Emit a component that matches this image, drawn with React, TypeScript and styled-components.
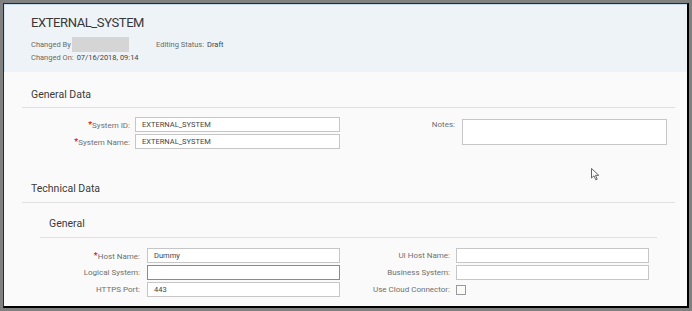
import React from "react";
import styled, { createGlobalStyle } from "styled-components";

const GlobalStyle = createGlobalStyle`
  html, body {
    margin: 0;
    padding: 0;
    background: #808080;
    width: 692px;
    height: 311px;
    overflow: hidden;
    font-family: Roboto, "Liberation Sans", sans-serif;
  }
`;

const Frame = styled.div`
  padding: 3px 0 0 3px;
`;

const Window = styled.div`
  position: relative;
  box-sizing: border-box;
  width: 686px;
  height: 305px;
  border-left: 1px solid #2a2a2a;
  border-top: 1px solid #2a2a2a;
  border-right: 2px solid #000;
  border-bottom: 2px solid #000;
  background: #fafafa;
  display: flex;
  flex-direction: column;
  overflow: hidden;
`;

const Header = styled.div`
  box-sizing: border-box;
  height: 68px;
  background: #eef3f8;
  border-top: 1px solid #c5d9ee;
  border-left: 1px solid #d6e4f2;
  padding: 8px 0 0 26px;
`;

const Title = styled.div`
  font-size: 13px;
  color: #383838;
  height: 19px;
  line-height: 19px;
  letter-spacing: -0.4px;
`;

const MetaRow = styled.div<{ $top?: number }>`
  display: flex;
  align-items: center;
  height: 13px;
  font-size: 7.5px;
  color: #6a6a6a;
  margin-top: ${(p) => p.$top ?? 0}px;
`;

const MetaCell = styled.div<{ $w?: number }>`
  display: flex;
  align-items: center;
  width: ${(p) => (p.$w ? `${p.$w}px` : "auto")};
`;

const Value = styled.span`
  color: #444;
  margin-left: 3px;
`;

const Masked = styled.span`
  display: inline-block;
  width: 57px;
  height: 15px;
  margin-left: 1px;
  background: #d5d5d5;
`;

const Content = styled.div`
  flex: 1;
  padding: 0 12px 0 18px;
`;

const SectionTitle = styled.div<{ $top: number; $indent?: number }>`
  margin-top: ${(p) => p.$top}px;
  padding-left: ${(p) => p.$indent ?? 9}px;
  font-size: 10.5px;
  color: #3a3a3a;
  height: 14px;
  line-height: 14px;
`;

const Divider = styled.div<{ $top: number; $inset?: number }>`
  margin: ${(p) => p.$top}px ${(p) => p.$inset ?? 0}px 0 ${(p) => p.$inset ?? 0}px;
  height: 1px;
  background: #e0e0e0;
`;

const FormGrid = styled.div<{ $cols: string; $top: number; $pitch: number }>`
  display: grid;
  grid-template-columns: ${(p) => p.$cols};
  grid-auto-rows: 15px;
  row-gap: ${(p) => p.$pitch - 15}px;
  margin-top: ${(p) => p.$top}px;
  align-items: center;
`;

const Label = styled.div<{ $gap: number }>`
  font-size: 8px;
  color: #707070;
  text-align: right;
  padding-right: ${(p) => p.$gap}px;
  white-space: nowrap;
`;

const Req = styled.span`
  color: #d00;
  font-size: 9px;
`;

const Input = styled.div<{ $focus?: boolean }>`
  box-sizing: border-box;
  height: 15px;
  background: #fff;
  border: 1px solid ${(p) => (p.$focus ? "#8a8a8a" : "#c6c6c6")};
  font-size: 7.5px;
  color: #444;
  line-height: 13px;
  padding-left: 6px;
`;

const Notes = styled.div`
  grid-row: span 2;
  align-self: start;
  box-sizing: border-box;
  margin-top: 2px;
  height: 26px;
  background: #fff;
  border: 1px solid #c6c6c6;
`;

const Check = styled.div`
  width: 10px;
  height: 10px;
  box-sizing: border-box;
  border: 1px solid #9a9a9a;
  background: #fafafa;
`;

const Cursor = styled.svg`
  position: absolute;
  left: 587px;
  top: 164px;
`;

export default function App() {
  return (
    <>
      <GlobalStyle />
      <Frame>
        <Window>
          <Header>
            <Title>EXTERNAL_SYSTEM</Title>
            <MetaRow $top={6}>
              <MetaCell $w={125}>
                Changed By
                <Masked />
              </MetaCell>
              <MetaCell>
                Editing Status:<Value>Draft</Value>
              </MetaCell>
            </MetaRow>
            <MetaRow>
              <MetaCell>
                Changed On:<Value>07/16/2018, 09:14</Value>
              </MetaCell>
            </MetaRow>
          </Header>
          <Content>
            <SectionTitle $top={16}>General Data</SectionTitle>
            <Divider $top={5} />
            <FormGrid $cols="113px 205px 122px 205px" $top={9} $pitch={17}>
              <Label $gap={5}>
                <Req>*</Req>System ID:
              </Label>
              <Input>EXTERNAL_SYSTEM</Input>
              <Label $gap={7}>Notes:</Label>
              <Notes />
              <Label $gap={5}>
                <Req>*</Req>System Name:
              </Label>
              <Input>EXTERNAL_SYSTEM</Input>
              <div />
            </FormGrid>
            <SectionTitle $top={33}>Technical Data</SectionTitle>
            <Divider $top={6} />
            <SectionTitle $top={14} $indent={27}>
              General
            </SectionTitle>
            <Divider $top={6} $inset={18} />
            <FormGrid $cols="125px 193px 116px 193px" $top={10} $pitch={17}>
              <Label $gap={7}>
                <Req>*</Req>Host Name:
              </Label>
              <Input>Dummy</Input>
              <Label $gap={6}>UI Host Name:</Label>
              <Input />
              <Label $gap={7}>Logical System:</Label>
              <Input $focus />
              <Label $gap={6}>Business System:</Label>
              <Input />
              <Label $gap={7}>HTTPS Port:</Label>
              <Input>443</Input>
              <Label $gap={6}>Use Cloud Connector:</Label>
              <Check />
            </FormGrid>
          </Content>
          <Cursor width="9" height="13" viewBox="0 0 9 13">
            <path
              d="M0.5 0.5 L0.5 10 L3 7.8 L4.8 11.8 L6.2 11.2 L4.5 7.3 L7.8 7.3 Z"
              fill="#fff"
              stroke="#555"
              strokeWidth="0.9"
            />
          </Cursor>
        </Window>
      </Frame>
    </>
  );
}
